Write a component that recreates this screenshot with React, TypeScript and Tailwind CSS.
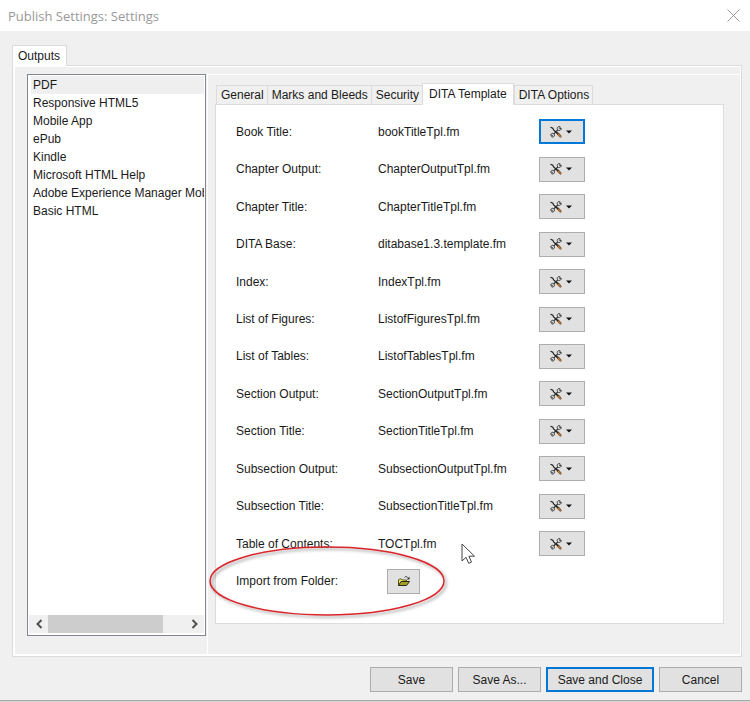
import React, { useState } from "react";

const outputs = [
  "PDF",
  "Responsive HTML5",
  "Mobile App",
  "ePub",
  "Kindle",
  "Microsoft HTML Help",
  "Adobe Experience Manager Mobile",
  "Basic HTML",
];

const tabs = [
  "General",
  "Marks and Bleeds",
  "Security",
  "DITA Template",
  "DITA Options",
];

const templates = [
  { id: "book-title", label: "Book Title:", file: "bookTitleTpl.fm" },
  { id: "chapter-output", label: "Chapter Output:", file: "ChapterOutputTpl.fm" },
  { id: "chapter-title", label: "Chapter Title:", file: "ChapterTitleTpl.fm" },
  { id: "dita-base", label: "DITA Base:", file: "ditabase1.3.template.fm" },
  { id: "index", label: "Index:", file: "IndexTpl.fm" },
  { id: "figures", label: "List of Figures:", file: "ListofFiguresTpl.fm" },
  { id: "tables", label: "List of Tables:", file: "ListofTablesTpl.fm" },
  { id: "section-output", label: "Section Output:", file: "SectionOutputTpl.fm" },
  { id: "section-title", label: "Section Title:", file: "SectionTitleTpl.fm" },
  { id: "subsection-output", label: "Subsection Output:", file: "SubsectionOutputTpl.fm" },
  { id: "subsection-title", label: "Subsection Title:", file: "SubsectionTitleTpl.fm" },
  { id: "toc", label: "Table of Contents:", file: "TOCTpl.fm" },
];

const ToolsIcon = () => (
  <svg width="12" height="12" viewBox="0 0 12 12" fill="none">
    {/* wrench with an open jaw at both ends */}
    <path d="M3.600 8 7.800 4" stroke="#333" strokeWidth="1.200" />
    <path
      d="M10.200.9C8.800.1 7.100 1 7.200 2.600c.1 1.600 1.900 2.400 3.200 1.500.6-.4.900-1 .9-1.600L9.600 2.700Z"
      fill="#e8e8e8"
      stroke="#3a3a3a"
    />
    <path
      d="M.7 9.200C.6 7.900 2 7 3.300 7.500c1.400.6 1.500 2.400.4 3.200-.6.4-1.400.5-2 .2L2.400 9.300Z"
      fill="#e8e8e8"
      stroke="#3a3a3a"
    />
    {/* screwdriver */}
    <path d="M.5 1.200 2.800 2.300 3.600 3.900 7.300 7.300" stroke="#222" strokeWidth="1.200" />
    <path d="M7.800 7.500 10.300 10.300" stroke="#3a2a1a" strokeWidth="2.400" strokeLinecap="round" />
    <path d="M8.600 8.500 10.200 10.300" stroke="#c07a30" strokeWidth="1.700" strokeLinecap="round" />
  </svg>
);

const FolderIcon = () => (
  <svg width="14" height="12" viewBox="0 0 14 12" fill="none">
    <path d="M1.500 10.500v-5.500l1-1h2l1 1h4v2" fill="#e9e36a" stroke="#55531a" />
    <path d="M1.500 10.500 4 6.500H12.500L9.500 10.500Z" fill="#a3a026" stroke="#2b2a10" />
    <path d="M7.500 2.500c1-1.300 2.400-1.300 3.400.3" stroke="#444" />
    <path d="M12.500 1.500v3H9.700Z" fill="#333" />
  </svg>
);

const Chevron = ({ d }: { d: string }) => (
  <svg width="8" height="10" viewBox="0 0 8 10" fill="none">
    <path d={d} stroke="#505050" strokeWidth="2" />
  </svg>
);

const App = () => {
  const [output, setOutput] = useState("PDF");
  const [tab, setTab] = useState("DITA Template");

  return (
    <div className="relative flex flex-col min-h-screen bg-[#d8d8d8] pb-px text-[12px] leading-[18px] text-[#1a1a1a] font-['Liberation_Sans',Arial,sans-serif]">
      <header className="flex items-center justify-between h-[31px] bg-white pl-2 pr-[10px]">
        <h1 className="text-[13px] text-[#999] font-['Open_Sans','Noto_Sans',sans-serif]">
          Publish Settings: Settings
        </h1>
        <button aria-label="Close">
          <svg width="13" height="13" viewBox="0 0 13 13" fill="none">
            <path d="M.5.5l12 12M12.500.5l-12 12" stroke="#999" />
          </svg>
        </button>
      </header>

      <main className="flex flex-col flex-1 bg-[#f0f0f0] border-b border-[#a6a6a6] pt-[14px] pb-2">
        <div className="flex pl-3" role="tablist">
          <button
            role="tab"
            aria-selected="true"
            className="z-10 h-[21px] -mb-px pl-[5px] pr-[6px] bg-white border border-b-0 border-[#dcdcdc]"
          >
            Outputs
          </button>
        </div>

        <div className="flex flex-1 ml-3 mr-2 border border-[#dcdcdc] bg-white pl-[2px] pr-px pt-px pb-[2px]">
          <div className="flex flex-1 min-w-0 bg-[#f0f0f0] pl-3 pt-[7px]">
            {/* list of outputs */}
            <div className="flex flex-col w-[179px] shrink-0 mb-[18px] border border-[#828790] bg-white p-px">
              <ul className="flex-1 pl-[2px] overflow-hidden">
                {outputs.map((name) => (
                  <li key={name}>
                    <button
                      onClick={() => setOutput(name)}
                      className={`block w-full pl-[2px] text-left whitespace-nowrap ${
                        name === output ? "bg-[#efefef]" : ""
                      }`}
                    >
                      {name}
                    </button>
                  </li>
                ))}
              </ul>
              <div className="flex h-[18px] mb-px bg-[#f0f0f0]">
                <button aria-label="Scroll left" className="flex items-center justify-center w-[19px]">
                  <Chevron d="M6.500 1 2.500 5l4 4" />
                </button>
                <div className="flex-1">
                  <div className="w-[84%] h-full bg-[#cdcdcd]" />
                </div>
                <button aria-label="Scroll right" className="flex items-center justify-center w-[19px]">
                  <Chevron d="M1.500 1l4 4-4 4" />
                </button>
              </div>
            </div>

            {/* settings of the chosen output */}
            <div className="flex flex-col flex-1 min-w-0 ml-px border-l border-t border-white pl-[7px] pr-4 pt-2 pb-[30px]">
              <div className="flex items-end h-[22px] pl-px -mb-px z-10" role="tablist">
                {tabs.map((name) => (
                  <button
                    key={name}
                    role="tab"
                    aria-selected={name === tab}
                    onClick={() => setTab(name)}
                    className={`border border-[#dcdcdc] whitespace-nowrap ${
                      name === tab
                        ? "h-[22px] px-[6px] bg-white border-b-white"
                        : "h-5 pl-1 pr-[3px] -mr-px bg-[#f0f0f0]"
                    }`}
                  >
                    {name}
                  </button>
                ))}
              </div>

              <div className="grid auto-rows-fr flex-1 bg-white border border-[#dcdcdc] pl-5 pt-2 pb-[23px]">
                {templates.map(({ id, label, file }, i) => (
                  <div key={id} className="grid grid-cols-[142px_161px_46px] items-center">
                    <label htmlFor={id}>{label}</label>
                    <span>{file}</span>
                    <button
                      id={id}
                      className={`flex items-center justify-center gap-1 h-[25px] pr-[2px] bg-[#e1e1e1] ${
                        i === 0 ? "border-2 border-[#0078d7]" : "border border-[#adadad]"
                      }`}
                    >
                      <ToolsIcon />
                      <svg width="6" height="4" viewBox="0 0 6 4">
                        <path d="M0 .5h6L3 3.500Z" fill="#111" />
                      </svg>
                    </button>
                  </div>
                ))}
                <div className="relative grid grid-cols-[142px_161px_46px] items-center">
                  <label htmlFor="import">Import from Folder:</label>
                  <button
                    id="import"
                    className="flex items-center justify-center w-[33px] h-[25px] ml-[9px] bg-[#e1e1e1] border border-[#adadad]"
                  >
                    <FolderIcon />
                  </button>
                  {/* red marker round the import row */}
                  <svg
                    className="absolute -left-7 -top-5 pointer-events-none"
                    width="242"
                    height="78"
                    viewBox="0 0 242 78"
                    fill="none"
                  >
                    <defs>
                      <filter id="shade" x="-5%" y="-10%" width="110%" height="125%">
                        <feDropShadow dx="2" dy="2" stdDeviation="1.500" floodColor="#000" floodOpacity=".4" />
                      </filter>
                    </defs>
                    <ellipse
                      cx="119"
                      cy="38"
                      rx="117"
                      ry="34"
                      stroke="#d9262b"
                      strokeWidth="1.500"
                      filter="url(#shade)"
                    />
                  </svg>
                  {/* mouse pointer */}
                  <svg
                    className="absolute left-[225px] -top-5 pointer-events-none"
                    width="15"
                    height="22"
                    viewBox="0 0 15 22"
                  >
                    <path
                      d="M1 1v17l4-3.700 2.700 6 2.800-1.200-2.600-5.900H13.500Z"
                      fill="#fff"
                      stroke="#444"
                    />
                  </svg>
                </div>
              </div>
            </div>
          </div>
        </div>

        <footer className="flex justify-end gap-[5px] pt-[10px] pr-2">
          <button className="w-[83px] h-[25px] bg-[#e1e1e1] border border-[#adadad]">Save</button>
          <button className="w-[83px] h-[25px] bg-[#e1e1e1] border border-[#adadad]">Save As...</button>
          <button className="w-[108px] h-[25px] bg-[#e1e1e1] border-2 border-[#0078d7]">Save and Close</button>
          <button className="w-[83px] h-[25px] bg-[#e1e1e1] border border-[#adadad]">Cancel</button>
        </footer>
      </main>
    </div>
  );
};

export default App;
